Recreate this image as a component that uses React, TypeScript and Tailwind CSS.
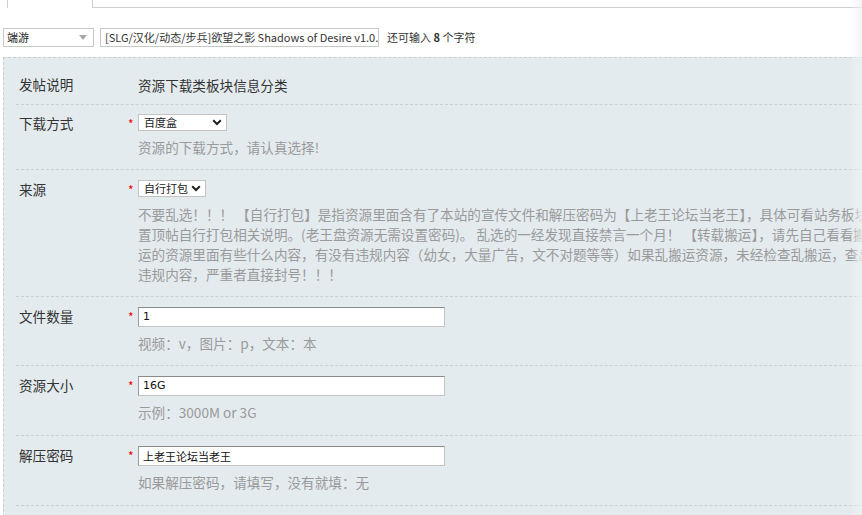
import React from "react";

const cjk = "font-['Noto_Sans_CJK_SC','Noto_Sans',sans-serif]";

function Chevron() {
  return (
    <svg width="10" height="7" viewBox="0 0 10 7" className="shrink-0">
      <path d="M1.2 1.2 L5 5 L8.8 1.2" fill="none" stroke="#222" strokeWidth="2" />
    </svg>
  );
}

function Star() {
  return <span className="w-[10px] shrink-0 text-[#e00] text-[12px] leading-[17px] pt-[1px]">*</span>;
}

function Hint({ children }: { children: React.ReactNode }) {
  return <div className="text-[13.6px] leading-[20px] text-[#9a9a9a] whitespace-nowrap">{children}</div>;
}

function Row({
  label,
  children,
  pt,
  pb,
}: {
  label: string;
  children: React.ReactNode;
  pt: string;
  pb: string;
}) {
  return (
    <div className={`flex border-b border-dashed border-[#c9d0d4] ${pt} ${pb}`}>
      <div className="w-[112px] pl-[3px] shrink-0 text-[13.6px] leading-[18px] text-[#333]">{label}</div>
      {children}
    </div>
  );
}

function TextInput({ value, cjkText }: { value: string; cjkText?: boolean }) {
  return (
    <div
      className={`w-[307px] h-[20px] bg-white border border-[#c4c4c4] border-t-[#8a8a8a] border-l-[#9a9a9a] pl-[4px] flex items-center text-[11px] text-[#111] ${
        cjkText ? "" : "font-['DejaVu_Sans',sans-serif]"
      }`}
    >
      {value}
    </div>
  );
}

export default function App() {
  return (
    <div className={`relative w-[862px] h-[515px] overflow-hidden bg-white ${cjk}`}>
      {/* tab strip */}
      <div className="flex h-[8px]">
        <div className="w-[7px]" />
        <div className="w-[86px] border-l border-r border-[#cfcfcf]" />
        <div className="flex-1 border-b border-[#cfcfcf]" />
      </div>

      {/* title row */}
      <div className="flex items-center mt-[20px] ml-[3px] h-[19px]">
        <div className="w-[91px] h-[19px] border border-[#c8c8c8] bg-white flex items-center pl-[3px] pr-[6px] text-[11px] text-[#222]">
          <span className="flex-1">端游</span>
          <svg width="8" height="5" viewBox="0 0 8 5">
            <path d="M0 0 L8 0 L4 5 Z" fill="#a8a8a8" />
          </svg>
        </div>
        <div className="ml-[6px] w-[279px] h-[19px] border border-[#c8c8c8] bg-white flex items-center pl-[4px] text-[11px] text-[#333] overflow-hidden whitespace-nowrap">
          [SLG/汉化/动态/步兵]欲望之影 Shadows of Desire v1.0.0
        </div>
        <div className="ml-[8px] text-[11px] text-[#333] whitespace-nowrap">
          还可输入 <b className="font-bold">8</b> 个字符
        </div>
      </div>

      {/* panel */}
      <div className="mt-[10px] ml-[3px] bg-[#e4ebef] border-t border-l border-dashed border-[#c9d0d4] h-[460px] pl-[12px]">
        <Row label="发帖说明" pt="pt-[17px]" pb="pb-[9px]">
          <div className="pl-[10px] text-[13.6px] leading-[20px] text-[#333]">资源下载类板块信息分类</div>
        </Row>

        <Row label="下载方式" pt="pt-[9px]" pb="pb-[12px]">
          <Star />
          <div>
            <div className="w-[89px] h-[17px] bg-white border border-[#c4c4c4] flex items-center pl-[5px] pr-[4px] text-[11px] text-[#222]">
              <span className="flex-1">百度盒</span>
              <Chevron />
            </div>
            <div className="mt-[6px]">
              <Hint>资源的下载方式，请认真选择!</Hint>
            </div>
          </div>
        </Row>

        <Row label="来源" pt="pt-[10px]" pb="pb-[12px]">
          <Star />
          <div>
            <div className="w-[68px] h-[17px] bg-white border border-[#c4c4c4] flex items-center pl-[5px] pr-[4px] text-[11px] text-[#222]">
              <span className="flex-1">自行打包</span>
              <Chevron />
            </div>
            <div className="mt-[7px]">
              <Hint>不要乱选！！！ 【自行打包】是指资源里面含有了本站的宣传文件和解压密码为【上老王论坛当老王】，具体可看站务板块的</Hint>
              <Hint>置顶帖自行打包相关说明。(老王盘资源无需设置密码)。 乱选的一经发现直接禁言一个月！ 【转载搬运】，请先自己看看搬运</Hint>
              <Hint>运的资源里面有些什么内容，有没有违规内容（幼女，大量广告，文不对题等等）如果乱搬运资源，未经检查乱搬运，查出有</Hint>
              <Hint>违规内容，严重者直接封号！！！</Hint>
            </div>
          </div>
        </Row>

        <Row label="文件数量" pt="pt-[10px]" pb="pb-[12px]">
          <Star />
          <div>
            <TextInput value="1" />
            <div className="mt-[6px]">
              <Hint>视频：v，图片：p，文本：本</Hint>
            </div>
          </div>
        </Row>

        <Row label="资源大小" pt="pt-[10px]" pb="pb-[13px]">
          <Star />
          <div>
            <TextInput value="16G" />
            <div className="mt-[6px]">
              <Hint>示例：3000M or 3G</Hint>
            </div>
          </div>
        </Row>

        <Row label="解压密码" pt="pt-[10px]" pb="pb-[13px]">
          <Star />
          <div>
            <TextInput value="上老王论坛当老王" cjkText />
            <div className="mt-[6px]">
              <Hint>如果解压密码，请填写，没有就填：无</Hint>
            </div>
          </div>
        </Row>
      </div>

      {/* right edge fade */}
      <div className="absolute right-0 top-0 bottom-0 w-[12px] bg-linear-to-r from-transparent to-[#eef1f3]/80" />
    </div>
  );
}
